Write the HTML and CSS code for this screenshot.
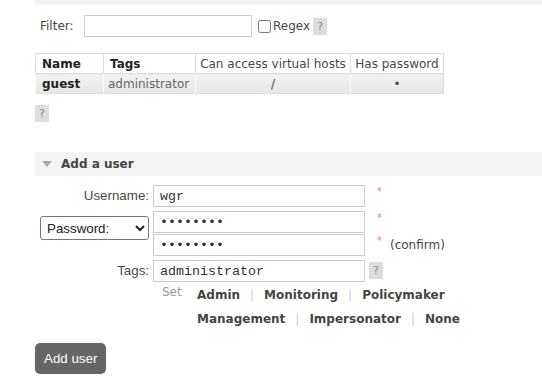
FILE: index.html
```html
<!DOCTYPE html>
<html lang="en">
<head>
  <meta charset="UTF-8">
  <title>Users - RabbitMQ Management</title>
  <link rel="stylesheet" href="styles.css">
</head>
<body>
  <div class="main">
    <div class="prev-section"></div>

    <div class="filter">
      <label class="filter-label" for="filter">Filter:</label>
      <input id="filter" class="filter-input" type="text">
      <input id="regex" class="regex-box" type="checkbox">
      <label for="regex" class="regex-label">Regex</label>
      <span class="help">?</span>
    </div>

    <table class="list">
      <colgroup>
        <col class="c-name">
        <col class="c-tags">
        <col class="c-vhosts">
        <col class="c-pass">
      </colgroup>
      <thead>
        <tr>
          <th class="left">Name</th>
          <th class="left">Tags</th>
          <th>Can access virtual hosts</th>
          <th>Has password</th>
        </tr>
      </thead>
      <tbody>
        <tr>
          <td class="left"><b>guest</b></td>
          <td class="left tag-cell">administrator</td>
          <td>/</td>
          <td>&bull;</td>
        </tr>
      </tbody>
    </table>

    <div class="help help-table">?</div>

    <div class="section">
      <h2 class="section-title"><span class="arrow"></span>Add a user</h2>

      <div class="form">
        <div class="form-row">
          <label class="lbl" for="username">Username:</label>
          <input id="username" class="field" type="text" value="wgr">
          <span class="req">*</span>
        </div>

        <div class="form-row pw-row">
          <div class="lbl">
            <select class="pw-mode">
              <option>Password:</option>
              <option>Hashed password:</option>
              <option>No password</option>
            </select>
          </div>
          <div class="pw-fields">
            <div class="pw-line">
              <input class="field" type="password" value="wgr12345">
              <span class="req">*</span>
            </div>
            <div class="pw-line">
              <input class="field" type="password" value="wgr12345">
              <span class="req">*</span>
              <span class="note">(confirm)</span>
            </div>
          </div>
        </div>

        <div class="form-row tags-row">
          <label class="lbl" for="tags">Tags:</label>
          <input id="tags" class="field" type="text" value="administrator">
          <span class="help help-tags">?</span>
        </div>

        <div class="form-row">
          <div class="lbl"></div>
          <span class="set">Set</span>
          <div class="tag-links">
            <span class="tag-link">Admin</span><span class="sep">|</span><span class="tag-link">Monitoring</span><span class="sep">|</span><span class="tag-link">Policymaker</span><br>
            <span class="tag-link">Management</span><span class="sep">|</span><span class="tag-link">Impersonator</span><span class="sep">|</span><span class="tag-link">None</span>
          </div>
        </div>
      </div>

      <button class="btn">Add user</button>
    </div>
  </div>
</body>
</html>
```

FILE: styles.css
```css
body {
  margin: 0;
  background-color: white;
  font-family: "DejaVu Sans", Verdana, sans-serif;
  font-size: 12px;
  color: #484848;
}
.main {
  padding-left: 35px;
}
.prev-section {
  height: 5px;
  background-color: #f4f4f4;
}

/* filtre */
.filter {
  display: flex;
  align-items: center;
  margin-top: 10px;
  height: 22px;
}
.filter-label {
  width: 44px;
  margin-left: 5px;
}
.filter-input {
  box-sizing: border-box;
  width: 168px;
  height: 22px;
  margin: 0;
  border: 1px solid #ccc;
  font-family: "Liberation Mono", monospace;
  font-size: 13.33px;
}
.regex-box {
  width: 13px;
  height: 13px;
  margin: 0 2px 0 6px;
}
.regex-label {
  margin-right: 3px;
}
.help {
  display: inline-flex;
  align-items: center;
  justify-content: center;
  width: 14px;
  height: 17px;
  background-color: #ddd;
  color: #888;
  font-size: 11px;
}

/* tableau */
.list {
  width: 408px;
  table-layout: fixed;
  margin-top: 16px;
  border-collapse: collapse;
  border: 1px solid #ddd;
}
.c-name { width: 68px; }
.c-tags { width: 92px; }
.c-vhosts { width: 155px; }
.c-pass { width: 93px; }
.list th,
.list td {
  box-sizing: border-box;
  height: 20px;
  padding: 0 2px;
  white-space: nowrap;
  text-align: center;
}
.list th {
  font-weight: normal;
  border: 1px solid #ddd;
  background-color: white;
}
.list td {
  background: linear-gradient(#f2f2f2, #e6e6e6);
  border-left: 1px solid #fafafa;
  border-bottom: 1px solid #ddd;
}
.list .left {
  padding-left: 6px;
  text-align: left;
}
.list th.left {
  font-weight: bold;
  color: #222;
}
.list td b {
  color: #222;
}
.list td.tag-cell {
  padding-left: 4px;
  color: #666;
}

.help-table {
  display: flex;
  margin-top: 11px;
}

/* ajouter un utilisateur */
.section {
  margin-top: 30px;
}
.section-title {
  display: flex;
  align-items: center;
  height: 24px;
  margin: 0;
  padding-left: 7px;
  background-color: #f4f4f4;
  font-size: 12px;
  color: #444;
}
.arrow {
  width: 0;
  height: 0;
  margin-right: 9px;
  border-left: 5px solid transparent;
  border-right: 5px solid transparent;
  border-top: 6px solid #aaa;
}
.form {
  margin-top: 9px;
}
.form-row {
  display: flex;
  align-items: flex-start;
}
.lbl {
  width: 114px;
  margin-right: 4px;
  text-align: right;
  font-family: "Liberation Sans", Arial, sans-serif;
  font-size: 13.33px;
  line-height: 22px;
}
.field {
  box-sizing: border-box;
  width: 212px;
  height: 22px;
  margin: 0;
  padding: 1px 6px;
  border: 1px solid #ccc;
  font-family: "Liberation Mono", monospace;
  font-size: 13.33px;
  color: #333;
}
.req {
  margin-left: 12px;
  margin-top: 2px;
  font-size: 10px;
  line-height: 10px;
  color: #f08080;
}
.pw-mode {
  box-sizing: border-box;
  width: 109px;
  height: 24px;
  margin: 5px 0 0 4px;
  padding: 0 2px;
  border: 1px solid #767676;
  border-radius: 3px;
  background-color: white;
  font-family: "Liberation Sans", Arial, sans-serif;
  font-size: 13.33px;
  color: #222;
}
.pw-row {
  margin-top: 4px;
}
.pw-line {
  display: flex;
  align-items: flex-start;
}
.pw-line + .pw-line {
  margin-top: 1px;
}
.note {
  margin-left: 8px;
  line-height: 22px;
}
.tags-row {
  margin-top: 4px;
}
.help-tags {
  margin: 2px 0 0 4px;
}
.set {
  width: 35px;
  padding-left: 9px;
  line-height: 18px;
  margin-top: 1px;
  color: #999;
}
.tag-links {
  margin-top: 1px;
  line-height: 24px;
}
.tag-link {
  font-weight: bold;
  color: #444;
}
.sep {
  margin: 0 10px;
  color: #ccc;
}
.btn {
  margin-top: 12px;
  padding: 0 9px;
  height: 31px;
  border: none;
  border-radius: 5px;
  background-color: #666;
  color: white;
  font-family: "Liberation Sans", Arial, sans-serif;
  font-size: 13.33px;
  cursor: pointer;
}
```
